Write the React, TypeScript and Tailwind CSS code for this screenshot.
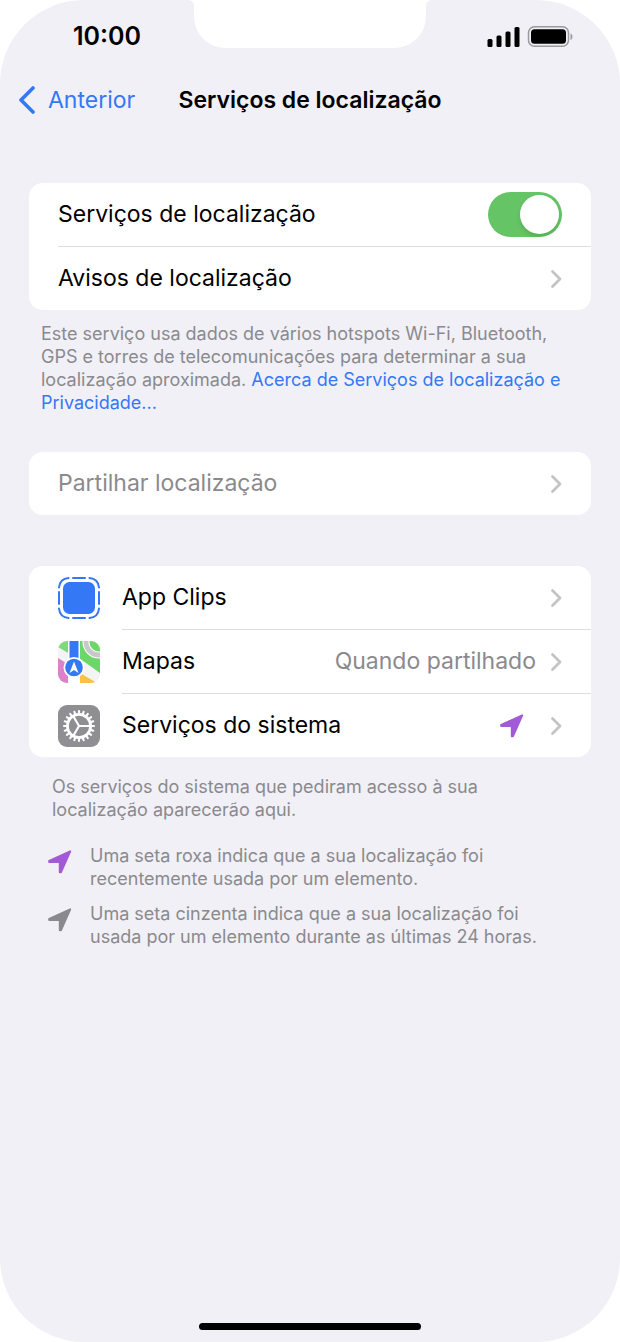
import type { ReactNode } from "react";

const TEETH = Array.from({ length: 20 }, (_, i) => i * 18);

function Chevron() {
    return (
        <svg viewBox="0 0 12 20" className="h-5 w-3 shrink-0" fill="none" stroke="#c4c4c6" strokeWidth="2.8" strokeLinecap="round" strokeLinejoin="round" aria-hidden="true">
            <path d="M2.5 2.6 10 10l-7.5 7.4" />
        </svg>
    );
}

function LocationArrow({ className }: { className: string }) {
    return (
        <svg viewBox="0 0 24 24" className={`size-6 shrink-0 ${className}`} fill="currentColor" stroke="currentColor" strokeWidth="2" strokeLinejoin="round" aria-hidden="true">
            <path d="M1.2 10.8 22.2 1.4 13 22.2H11.8V11.9H1.2Z" />
        </svg>
    );
}

function ClipsIcon() {
    return (
        <svg viewBox="0 0 42 42" className="size-[42px] shrink-0" aria-hidden="true">
            <rect x="5" y="5" width="32" height="32" rx="6.5" fill="#3478f6" />
            <g fill="none" stroke="#3478f6" strokeWidth="2" strokeLinecap="round">
                <path d="M15 1h12M15 41h12M1 15v12M41 15v12" />
                <path d="M1 10.500C1.500 5 5 1.500 10.500 1M31.500 1C37 1.500 40.500 5 41 10.500M41 31.500C40.500 37 37 40.500 31.500 41M10.500 41C5 40.500 1.500 37 1 31.500" />
            </g>
        </svg>
    );
}

function MapsIcon() {
    return (
        <svg viewBox="0 0 42 42" className="size-[42px] shrink-0 rounded-[9px]" aria-hidden="true">
            <rect width="42" height="42" fill="#f5f4f5" />
            <path d="M0 0h10v12L0 6Z" fill="#7bdb7a" />
            <path d="M21 0h21v32L21 17Z" fill="#6bd768" />
            <path d="M0 17 21 30v12H0Z" fill="#dc82cb" />
            <path d="M22 32 39 42H22Z" fill="#f8c342" />
            <path d="M10 0h12v42H10Z" fill="#fff" />
            <path d="M11.500 0h9v20h-9Z" fill="#3478f6" />
            <circle cx="41" cy="1" r="13" fill="none" stroke="#fff" strokeWidth="7" />
            <circle cx="41" cy="1" r="13" fill="none" stroke="#c8c8c9" strokeWidth="4.8" />
            <circle cx="16" cy="26.500" r="10.500" fill="#fff" />
            <circle cx="16" cy="26.500" r="8.800" fill="#3478f6" />
            <path d="m16 20.500 4.500 11.500-4.500-3-4.500 3Z" fill="#fff" />
        </svg>
    );
}

function GearIcon() {
    return (
        <svg viewBox="0 0 42 42" className="size-[42px] shrink-0" aria-hidden="true">
            <rect width="42" height="42" rx="9" fill="#8e8e93" />
            <g stroke="#fff" fill="none">
                <circle cx="21" cy="21" r="11.600" strokeWidth="2.8" />
                {TEETH.map((angle) => (
                    <path key={angle} d="M21 9V6" strokeWidth="2.1" strokeLinecap="round" transform={`rotate(${angle} 21 21)`} />
                ))}
                <path d="M21 21h11.500M21 21l-5.800-10M21 21l-5.800 10" strokeWidth="2.2" />
            </g>
        </svg>
    );
}

function Card({ children }: { children: ReactNode }) {
    return <div className="overflow-hidden rounded-[14px] bg-white">{children}</div>;
}

type RowProps = {
    label: string;
    icon?: ReactNode;
    detail?: ReactNode;
    muted?: boolean;
    divided?: boolean;
};

function Row({ label, icon, detail, muted, divided }: RowProps) {
    return (
        <button type="button" className="flex w-full items-center gap-[22px] pl-[29px] text-left">
            {icon}
            <span className={`flex grow items-center gap-[14px] pr-[29px] ${divided ? "h-16 border-b border-[#dedee0]" : "h-[63px]"}`}>
                <span className={`grow ${muted ? "text-[#8a8a8e]" : ""}`}>{label}</span>
                {detail}
                <Chevron />
            </span>
        </button>
    );
}

function StatusBar() {
    return (
        <div className="relative flex h-[74px] items-center justify-between pr-[47px] pl-[73px]">
            <span className="text-[25px] font-semibold">10:00</span>
            <svg viewBox="0 0 244 48" className="absolute top-0 left-1/2 h-12 w-[244px] -translate-x-1/2" aria-hidden="true">
                <path d="M0 0C4 0 6 3 6 7v9c0 18 14 32 32 32h168c18 0 32-14 32-32V7c0-4 2-7 6-7Z" fill="#fff" />
            </svg>
            <svg viewBox="0 0 86 22" className="h-[22px] w-[86px]" aria-hidden="true">
                <rect x="0.5" y="13" width="5" height="8" rx="1.5" />
                <rect x="9.5" y="9.5" width="5" height="11.5" rx="1.5" />
                <rect x="18.5" y="5.5" width="5" height="15.5" rx="1.5" />
                <rect x="27.5" y="1" width="5" height="20" rx="1.5" />
                <rect x="41.5" y="0.8" width="40" height="19.500" rx="6" fill="none" stroke="#9a9a9e" strokeWidth="1.5" />
                <rect x="44" y="3.300" width="35" height="14.500" rx="3.500" />
                <path d="M83.500 7.500c2.600 1 2.600 5.500 0 6.500Z" fill="#9a9a9e" />
            </svg>
        </div>
    );
}

export default function App() {
    return (
        <div className="bg-white font-['Inter',sans-serif] text-black">
            <main className="flex min-h-screen flex-col overflow-hidden rounded-[84px] bg-[#f1f0f6]">
                <StatusBar />
                <header className="grid h-[52px] grid-cols-[1fr_auto_1fr] items-center px-[19px] text-[23px]">
                    <a href="#" className="flex items-center gap-[13px] text-[#3478f6]">
                        <svg viewBox="0 0 16 28" className="h-7 w-4" fill="none" stroke="currentColor" strokeWidth="3.6" strokeLinecap="round" strokeLinejoin="round" aria-hidden="true">
                            <path d="M14 2 2 14l12 12" />
                        </svg>
                        Anterior
                    </a>
                    <h1 className="font-semibold">Serviços de localização</h1>
                </header>

                <div className="mx-[29px] mt-[57px] text-[23px]">
                    <Card>
                        <label className="flex items-center pl-[29px]">
                            <span className="flex h-16 grow items-center justify-between border-b border-[#dedee0] pr-[29px]">
                                Serviços de localização
                                <input
                                    type="checkbox"
                                    role="switch"
                                    defaultChecked
                                    className="flex h-[45px] w-[74px] appearance-none items-center rounded-full bg-[#dedee0] p-[3px] before:size-[39px] before:rounded-full before:bg-white before:shadow-md checked:justify-end checked:bg-[#65c466]"
                                />
                            </span>
                        </label>
                        <Row label="Avisos de localização" />
                    </Card>
                    <p className="mt-3 mb-[38px] px-3 text-lg leading-[23px] text-[#8a8a8e]">
                        Este serviço usa dados de vários hotspots Wi-Fi, Bluetooth, GPS e torres de telecomunicações para determinar a sua localização aproximada.{" "}
                        <a href="#" className="text-[#3478f6]">Acerca de Serviços de localização e Privacidade...</a>
                    </p>
                    <Card>
                        <Row label="Partilhar localização" muted />
                    </Card>
                    <div className="mt-[51px]">
                        <Card>
                            <Row label="App Clips" icon={<ClipsIcon />} divided />
                            <Row label="Mapas" icon={<MapsIcon />} detail={<span className="text-[#8a8a8e]">Quando partilhado</span>} divided />
                            <Row label="Serviços do sistema" icon={<GearIcon />} detail={<LocationArrow className="mr-3 text-[#a35ad7]" />} />
                        </Card>
                    </div>
                </div>

                <div className="mx-[52px] mt-[18px] text-lg leading-[23px] text-[#8a8a8e]">
                    <p className="max-w-[460px]">Os serviços do sistema que pediram acesso à sua localização aparecerão aqui.</p>
                    <ul className="-ml-1 mt-[23px] flex flex-col gap-3">
                        <li className="flex gap-[18px]">
                            <LocationArrow className="mt-[6px] text-[#a35ad7]" />
                            <span className="max-w-[470px]">Uma seta roxa indica que a sua localização foi recentemente usada por um elemento.</span>
                        </li>
                        <li className="flex gap-[18px]">
                            <LocationArrow className="mt-[6px]" />
                            <span className="max-w-[470px]">Uma seta cinzenta indica que a sua localização foi usada por um elemento durante as últimas 24 horas.</span>
                        </li>
                    </ul>
                </div>

                <div className="mx-auto mt-auto mb-3 h-[7px] w-[222px] rounded-full bg-black" />
            </main>
        </div>
    );
}
